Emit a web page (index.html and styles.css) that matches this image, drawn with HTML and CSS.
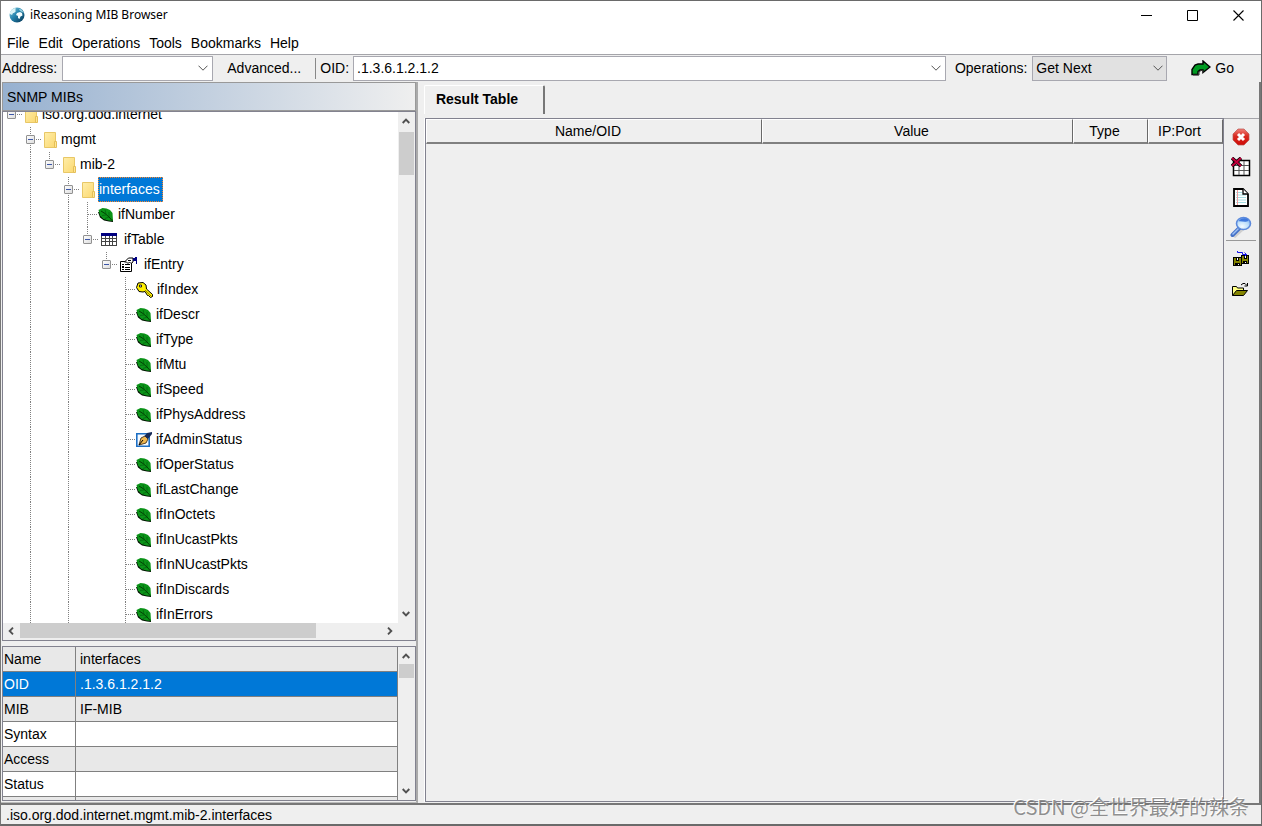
FILE: index.html
```html
<!DOCTYPE html>
<html lang="en">
<head>
<meta charset="utf-8">
<title>iReasoning MIB Browser</title>
<link rel="stylesheet" href="styles.css">
</head>
<body>
<svg class="defs" aria-hidden="true">
  <defs>
    <linearGradient id="fold" x1="0" y1="0" x2="1" y2="1"><stop offset="0" stop-color="#ffeeaa"/><stop offset="1" stop-color="#fbd870"/></linearGradient>
    <linearGradient id="box" x1="0" y1="0" x2="1" y2="1"><stop offset="0" stop-color="#fff"/><stop offset="1" stop-color="#dcdcdc"/></linearGradient>
    <linearGradient id="globe" x1="0" y1="0" x2="1" y2="1"><stop offset="0" stop-color="#8fd0e0"/><stop offset=".45" stop-color="#2585ae"/><stop offset="1" stop-color="#04304f"/></linearGradient>
    <linearGradient id="red" x1="0" y1="0" x2="0" y2="1"><stop offset="0" stop-color="#f08078"/><stop offset=".45" stop-color="#d82a20"/><stop offset="1" stop-color="#d00c08"/></linearGradient>
    <radialGradient id="lens" cx=".4" cy=".75" r=".8"><stop offset="0" stop-color="#f4fbff"/><stop offset=".6" stop-color="#b8dcfa"/><stop offset="1" stop-color="#6ea0ec"/></radialGradient>
    <symbol id="i-minus" viewBox="0 0 9 9"><rect x=".5" y=".5" width="8" height="8" rx=".5" fill="url(#box)" stroke="#919191"/><path d="M2 4.500h5" stroke="#3c56a8"/></symbol>
    <symbol id="i-folder" viewBox="0 0 14 16"><path d="M.5.5h11v15H.5z" fill="url(#fold)" stroke="#e8c766"/><path d="M10.500 9.500h2v6h-2z" fill="#ffe694" stroke="#e5bf58"/></symbol>
    <symbol id="i-leaf" viewBox="0 0 16 16"><path d="M0 5h2l3 6 6 2 4-1v3l-4-.5-5-1-4-3z" fill="#001400"/><path d="M.5 3L4.500 1l4 .5 3.500 1.500 2.500 3 .5 8-4.500-.5-5-1.500-3.500-3.500z" fill="#0b9418"/><path d="M3 4l4 2.500 4 3.500 3.500 4" fill="none" stroke="#003600" stroke-width=".9"/><path d="M7 2.500l1 4.500M11 5v5M4 8.500l4-.5M7 11.500l4-1.500" fill="none" stroke="#00560a" stroke-width=".6"/></symbol>
    <symbol id="i-table" viewBox="0 0 16 13"><path d="M0 0h16v13H0z" fill="#444"/><path d="M0 0h16v3H0z" fill="#000080"/><path d="M1 3h3v2H1zm4 0h3v2H5zm4 0h2v2H9zm3 0h3v2h-3zM1 6h3v2H1zm4 0h3v2H5zm4 0h2v2H9zm3 0h3v2h-3zM1 9h3v3H1zm4 0h3v3H5zm4 0h2v3H9zm3 0h3v3h-3z" fill="#fff"/></symbol>
    <symbol id="i-entry" viewBox="0 0 17 15"><path d="M.5 4.500h11v10H.5z" fill="#fff" stroke="#000"/><path d="M2 7h2v1H2zm3 0h5v1H5zM2 9h2v2H2zm3 1h5v1H5zM2 12h2v1H2zm3 0h5v1H5z" fill="#000"/><path d="M4.500 5l4-4H13v4l-2 1.500-1.500-1.500L8 6.500 6.500 5z" fill="#fff" stroke="#000"/><path d="M8 3.500h3" stroke="#000"/><path d="M13 1h2V0h2v7h-1V4h-3z" fill="#000080"/></symbol>
    <symbol id="i-key" viewBox="0 0 17 16"><path d="M2 1l5-.5 3 2.500.5 4 6 5.500v2l-2 1-2-2h-1l-2.500-4-2 .5-4-.5-2.500-4z" fill="#fff000" stroke="#000"/><path d="M3.500 3h2v2h-2z" fill="#fff" stroke="#222"/><path d="M9 8l6 6" stroke="#776c00" stroke-width=".8"/></symbol>
    <symbol id="i-pen" viewBox="0 0 16 15"><path d="M.8 1.800h12.400v12.400H.8z" fill="#f5faff" stroke="#1d6fc4" stroke-width="1.600"/><path d="M3 13l2-7 4-2 3 3-2 4z" fill="#f0b850" stroke="#2a1a08" stroke-width=".8"/><path d="M3 13l4-5" stroke="#000"/><path d="M8.500 4L11 1l5-1v2l-4 5z" fill="#152a58"/></symbol>
    <symbol id="i-down" viewBox="0 0 10 6"><path d="M.5.7L5 5.200 9.500.7" fill="none" stroke="#555"/></symbol>
    <symbol id="i-arr" viewBox="0 0 8 6"><path d="M.7 5L4 1.700 7.300 5" fill="none" stroke="#505050" stroke-width="1.900"/></symbol>
  </defs>
</svg>
<div class="window">
  <header class="titlebar">
    <svg class="logo" viewBox="0 0 16 16"><circle cx="8" cy="8" r="7.500" fill="url(#globe)"/><path d="M1 5l2-2.500L6 1l1 1-1 1 1 1-2 2H4l-1 2-2-1z" fill="#d9f3f6"/><path d="M8 6l3-1 2 1 .5 2.500-2 1L10.500 12 9 11V9L7 8z" fill="#f4fdfe"/><path d="M9.500 1.500l3 1L15 6l-2-1-2-1z" fill="#8fcbdc"/></svg>
    <h1 class="title">iReasoning MIB Browser</h1>
    <button class="win-btn" aria-label="Minimize"><svg width="11" height="11" viewBox="0 0 11 11"><path d="M0 5.500h11" stroke="#000"/></svg></button>
    <button class="win-btn" aria-label="Maximize"><svg width="11" height="11" viewBox="0 0 11 11"><path d="M.5.5h10v10H.5z" fill="none" stroke="#000"/></svg></button>
    <button class="win-btn" aria-label="Close"><svg width="11" height="11" viewBox="0 0 11 11"><path d="M.5.5l10 10M10.500.5l-10 10" stroke="#000" stroke-width="1.100"/></svg></button>
  </header>
  <nav class="menubar">
    <button>File</button><button>Edit</button><button>Operations</button><button>Tools</button><button>Bookmarks</button><button>Help</button>
  </nav>
  <div class="toolbar">
    <label for="address">Address:</label>
    <div class="combo combo-address"><input id="address" type="text"><button aria-label="Show addresses"><svg width="10" height="6"><use href="#i-down"/></svg></button></div>
    <button class="advanced">Advanced...</button>
    <label class="oid-label" for="oid">OID:</label>
    <div class="combo combo-oid"><input id="oid" type="text" value=".1.3.6.1.2.1.2"><button aria-label="Show OIDs"><svg width="10" height="6"><use href="#i-down"/></svg></button></div>
    <label class="op-label" for="op">Operations:</label>
    <div class="pick"><select id="op"><option>Get Next</option></select><svg width="10" height="6"><use href="#i-down"/></svg></div>
    <button class="go"><svg width="20" height="16" viewBox="0 0 20 16"><path d="M1 14.500V9.500L4 5l3-1h5V1l7 6-7 5.500V10H9l-2 1.500v3z" fill="#009a22" stroke="#000" stroke-width="1.400"/><path d="M2 15h6v-3l2-1.500h2V13" fill="none" stroke="#333"/></svg>Go</button>
  </div>
  <main class="body">
    <aside class="side">
      <h2 class="side-title">SNMP MIBs</h2>
      <div class="tree-box">
        <div class="tree-view"><ul class="tree" role="tree" id="tree"></ul></div>
        <div class="vbar"><svg width="8" height="6"><use href="#i-arr"/></svg><div class="vthumb"></div><svg class="flip" width="8" height="6"><use href="#i-arr"/></svg></div>
        <div class="hbar"><svg class="left" width="8" height="6"><use href="#i-arr"/></svg><div class="htrack"><div class="hthumb"></div></div><svg class="right" width="8" height="6"><use href="#i-arr"/></svg></div>
      </div>
      <div class="details">
        <div class="details-view">
          <table>
            <tbody>
              <tr><th scope="row">Name</th><td>interfaces</td></tr>
              <tr class="selected"><th scope="row">OID</th><td>.1.3.6.1.2.1.2</td></tr>
              <tr><th scope="row">MIB</th><td>IF-MIB</td></tr>
              <tr><th scope="row">Syntax</th><td></td></tr>
              <tr><th scope="row">Access</th><td></td></tr>
              <tr><th scope="row">Status</th><td></td></tr>
              <tr><th scope="row"></th><td></td></tr>
            </tbody>
          </table>
        </div>
        <div class="vbar"><svg width="8" height="6"><use href="#i-arr"/></svg><div class="vthumb short"></div><svg class="flip" width="8" height="6"><use href="#i-arr"/></svg></div>
      </div>
    </aside>
    <section class="results">
      <div class="tabs"><button class="tab" role="tab" aria-selected="true">Result Table</button></div>
      <div class="pane">
        <div class="grid">
          <table>
            <colgroup><col><col class="c-value"><col class="c-small"><col class="c-small"></colgroup>
            <thead><tr><th scope="col">Name/OID</th><th scope="col">Value</th><th scope="col">Type</th><th scope="col">IP:Port</th></tr></thead>
          </table>
        </div>
        <div class="tools">
          <button aria-label="Stop"><svg width="18" height="18" viewBox="0 0 18 18"><path d="M6 1h6l5 5v6l-5 5H6l-5-5V6z" fill="url(#red)" stroke="#b9554f" stroke-width=".7"/><path d="M6 6l6 6M12 6l-6 6" stroke="#fff" stroke-width="3"/></svg></button>
          <button aria-label="Clear table"><svg width="20" height="20" viewBox="0 0 20 20"><path d="M2.500 3.500h16v15h-16z" fill="#fff" stroke="#000" stroke-width="1.500"/><path d="M3 8.500h15M3 13.500h15M8 4v14M13 4v14" stroke="#555"/><path d="M1 1l9 8M10 1L1 9" stroke="#000" stroke-width="3.400"/><path d="M1 1l9 8M10 1L1 9" stroke="#c4003c" stroke-width="2"/></svg></button>
          <button aria-label="View document"><svg width="16" height="19" viewBox="0 0 16 19"><path d="M1 1h9l5 5v12H1z" fill="#fff" stroke="#000" stroke-width="1.800"/><path d="M3 4.500h6M3 7h10M3 9.500h10M3 12h10M3 14.500h10" stroke="#a5dfe4"/><path d="M4.500 2v15" stroke="#eba0a0"/><path d="M10 1v5h5" fill="#fff" stroke="#000" stroke-width="1.300"/></svg></button>
          <button aria-label="Find"><svg width="22" height="22" viewBox="0 0 22 22"><path d="M4 21l9-8" stroke="#bbb" stroke-width="3" opacity=".6"/><path d="M2.500 19l7-7" stroke="#4672c8" stroke-width="4" stroke-linecap="round"/><path d="M2.500 18.500l6-6" stroke="#9cc0f4" stroke-width="1.500"/><ellipse cx="13.500" cy="7.500" rx="7" ry="6" fill="url(#lens)" stroke="#5c8adc" stroke-width="1.600"/><path d="M8.500 5.500c2-4 9-4 10-1-3 3-7 0-10 1z" fill="#3f78dc"/></svg></button>
          <hr>
          <button aria-label="Save all"><svg width="16" height="16" viewBox="0 0 16 16"><path d="M0 6h9v9H0zM8 4h8v9H8z" fill="#000"/><path d="M1 7h2v3h3V7h2v7H7v-2H2v2H1zM9 5h2v3h3V5h1v7h-1v-2h-4v2H9z" fill="#848400"/><path d="M4 7h1v2H4zm8-2h1v2h-1zM5 13h1v1H5zm7-2h1v1h-1z" fill="#fff"/><path d="M4.500 0v1.500h5v2h4M11.500 1.500l2 2-2 2" fill="none" stroke="#1414e8"/></svg></button>
          <button aria-label="Open"><svg width="17" height="15" viewBox="0 0 17 15"><path d="M.5 13.500v-9h4l1 1.500h6v3" fill="#ffff84" stroke="#000"/><path d="M.5 13.500l4-5h11l-4 5z" fill="#848400" stroke="#000"/><path d="M9 3l2-1.500h2l2 2M15.500 1v3h-3" fill="none" stroke="#000"/></svg></button>
        </div>
      </div>
    </section>
  </main>
  <footer class="status">.iso.org.dod.internet.mgmt.mib-2.interfaces</footer>
  <div class="watermark">CSDN @全世界最好的辣条</div>
</div>
<script src="tree.js"></script>
</body>
</html>
```
FILE: tree.js
```js
// guides: one character per indent column. "." blank, "|" full line, "+" expander,
// "^" expander with a line above, "v" expander on a full line, "t" leaf branch.
const nodes = [
  ["+", "folder", "iso.org.dod.internet"],
  [".v", "folder", "mgmt"],
  [".|^", "folder", "mib-2"],
  [".|.v", "folder", "interfaces", true],
  [".|.|t", "leaf", "ifNumber"],
  [".|.|^", "table", "ifTable"],
  [".|.|.^", "entry", "ifEntry"],
  [".|.|..t", "key", "ifIndex"],
  ...["ifDescr", "ifType", "ifMtu", "ifSpeed", "ifPhysAddress"].map(n => [".|.|..t", "leaf", n]),
  [".|.|..t", "pen", "ifAdminStatus"],
  ...["ifOperStatus", "ifLastChange", "ifInOctets", "ifInUcastPkts", "ifInNUcastPkts", "ifInDiscards", "ifInErrors"].map(n => [".|.|..t", "leaf", n])
];
const sizes = { folder: [14, 16], leaf: [16, 16], table: [16, 13], entry: [17, 15], key: [17, 16], pen: [16, 15] };
const kinds = { ".": "", "|": "line", "+": "exp", "^": "exp above", "v": "exp line", "t": "line twig" };
document.getElementById("tree").innerHTML = nodes.map(([guides, icon, name, selected]) => {
  const [w, h] = sizes[icon];
  // Columns 1 and 3 carry the long sibling lines; ifTable is the last child of interfaces.
  const cols = [...guides].map(g => {
    const box = "+^v".includes(g) ? '<svg width="9" height="9"><use href="#i-minus"/></svg>' : "";
    return `<span class="guide ${kinds[g]}">${box}</span>`;
  }).join("");
  return `<li class="node is-${icon}" role="treeitem" aria-level="${guides.length}">${cols}<svg class="icon" width="${w}" height="${h}"><use href="#i-${icon}"/></svg><span class="name${selected ? " selected" : ""}">${name}</span></li>`;
}).join("");
```
FILE: styles.css
```css
* { box-sizing: border-box; }
html, body { height: 100%; margin: 0; }
body { font: 14px/16px "Liberation Sans", Arial, sans-serif; color: #000; background: #efefef; }
button { font: inherit; color: inherit; background: none; border: 0; padding: 0; }
input, select { font: inherit; color: inherit; }
svg { display: block; flex: none; }
.defs { position: absolute; width: 0; height: 0; }

.window { position: relative; height: 100vh; display: flex; flex-direction: column; border: 1px solid #6a6a6a; border-bottom-width: 2px; border-left-color: #777; }
.titlebar { display: flex; align-items: center; height: 30px; background: #fff; padding: 0 0 2px 8px; }
.logo { width: 16px; height: 16px; }
.title { flex: 1; margin: 0 0 0 5px; font: 12px/16px "Noto Sans", "Open Sans", sans-serif; }
.win-btn { width: 46px; height: 28px; display: grid; place-items: center; }
.menubar { display: flex; gap: 9px; height: 24px; padding: 0 6px; background: #fff; border-bottom: 1px solid #a5a5aa; }

.toolbar { display: flex; align-items: center; height: 27px; padding: 0 0 1px 1px; }
.combo { display: flex; height: 25px; background: #fff; border: 1px solid #a8a8b0; }
.combo input { flex: 1; min-width: 0; border: 0; padding: 0 3px; background: none; outline: 0; }
.combo button { width: 18px; display: grid; place-items: center; }
.combo-address { width: 151px; margin-left: 5px; }
.advanced { width: 103px; height: 21px; border-right: 1px solid #888; }
.oid-label { margin-left: 4px; }
.combo-oid { flex: 1; margin-left: 4px; }
.op-label { margin-left: 9px; }
.pick { display: grid; width: 135px; margin-left: 5px; align-items: center; }
.pick > * { grid-area: 1 / 1; }
.pick select { appearance: none; height: 25px; padding: 0 3px; background: #e1e1e1; border: 1px solid #a8a8b0; border-radius: 0; }
.pick svg { justify-self: end; margin-right: 4px; pointer-events: none; }
.go { display: flex; align-items: center; gap: 4px; margin: 0 27px 0 24px; }

.body { flex: 1; min-height: 0; display: flex; gap: 6px; border-bottom: 2px solid #777; }
.side { flex: 0 0 417px; display: flex; flex-direction: column; min-height: 0; border-right: 2px solid #aaa; border-bottom: 1px solid #bbb; padding: 0 0 1px 1px; }
.side-title { margin: 0; height: 29px; padding: 6px 4px; font-size: 14px; line-height: 16px; font-weight: 400; background: linear-gradient(90deg, #97b1d0, #efefef); border: 1px solid #999; }
.tree-box { flex: 1; min-height: 0; display: grid; grid-template: minmax(0, 1fr) 17px / minmax(0, 1fr) 17px; border: 1px solid #82828f; }
.tree-view { overflow: hidden; background: #fff; }
.tree { list-style: none; margin: -10px 0 0; padding: 0; }
.node { display: flex; align-items: center; height: 25px; }
.guide { width: 19px; height: 25px; flex: none; display: flex; align-items: center; padding-left: 4px; background-repeat: no-repeat; background-position: 8px 0; }
.line, .above { background-image: repeating-linear-gradient(#808080 0 1px, transparent 1px 2px); background-size: 1px 100%; }
.above { background-size: 1px 12px; }
.exp::after, .twig::after { content: ""; height: 1px; flex: 1; background: repeating-linear-gradient(90deg, #808080 0 1px, transparent 1px 2px); }
.exp::after { margin-left: 1px; }
.twig::after { margin-left: 5px; }
.icon { margin-left: 3px; }
.is-leaf .icon, .is-pen .icon, .is-key .icon { margin-left: 0; }
.name { margin-left: 3px; line-height: 25px; padding: 0 1px; }
.is-folder .name { margin-left: 2px; }
.is-table .name, .is-entry .name { margin-left: 6px; }
.name.selected { background: #0078d7; color: #fff; outline: 1px dotted #ff8728; outline-offset: -1px; padding-right: 3px; }
.vbar { display: flex; flex-direction: column; align-items: center; justify-content: space-between; padding: 6px 1px 6px 0; }
.vthumb { width: 15px; height: 43px; margin: 8px 0 auto; background: #cdcdcd; }
.vthumb.short { height: 14px; margin-top: 5px; }
.flip { transform: rotate(180deg); }
.left { transform: rotate(-90deg); }
.right { transform: rotate(90deg); }
.hbar { grid-column: 1 / 3; display: flex; align-items: center; padding: 0 21px 2px 4px; }
.htrack { flex: 1; margin: 0 5px; }
.hthumb { width: 82%; height: 15px; background: #cdcdcd; }

.details { flex: 0 0 155px; min-height: 0; margin-top: 5px; display: grid; grid-template: minmax(0, 1fr) / minmax(0, 1fr) 17px; border: 1px solid #82828f; }
.details-view { overflow: hidden; border-right: 1px solid #808080; }
.details table { width: 100%; border-collapse: separate; border-spacing: 0; table-layout: fixed; }
.details th, .details td { height: 25px; padding: 0; text-align: left; font-weight: 400; border-bottom: 1px solid #808080; }
.details th { width: 73px; padding-left: 1px; border-right: 1px solid #808080; }
.details td { padding-left: 4px; }
.details tr { background: #fff; }
.details tr:nth-child(odd) { background: #e8e8e8; }
.details tr.selected { background: #0078d7; color: #fff; }

.results { flex: 1; min-width: 0; display: flex; flex-direction: column; border-right: 2px solid #777; }
.tabs { height: 36px; padding-top: 3px; }
.tab { width: 121px; height: 29px; padding: 0 14px 2px 0; font-weight: 700; border-top: 1px solid #fff; border-left: 1px solid #fff; border-right: 2px solid #777; border-radius: 2px 2px 0 0; }
.pane { flex: 1; display: flex; min-height: 0; border-left: 1px solid #fff; margin-bottom: 1px; }
.grid { flex: 1; min-width: 0; border: 1px solid #82828f; }
.grid table { width: 100%; table-layout: fixed; border-collapse: separate; border-spacing: 0; }
.c-value { width: 311px; }
.c-small { width: 75px; }
.grid th { height: 25px; padding: 0 12px 0 0; font-weight: 400; border: 1px solid #fff; border-right-color: #696969; border-bottom: 2px solid #808080; }
.tools { width: 35px; display: flex; flex-direction: column; align-items: center; padding: 3px 2px 0 0; border-top: 1px solid #a5a5aa; }
.tools button { width: 30px; height: 30px; display: grid; place-items: center; }
.tools hr { width: 30px; margin: -2px 0 3px; border: 0; border-top: 1px solid #999; }

.status { height: 19px; padding: 2px 5px; }
.watermark { position: absolute; right: 12px; bottom: 3px; font: 20px/28px "Noto Sans CJK SC", sans-serif; color: rgba(110, 110, 110, .75); text-shadow: -1px -1px 0 #fff; pointer-events: none; }
```
